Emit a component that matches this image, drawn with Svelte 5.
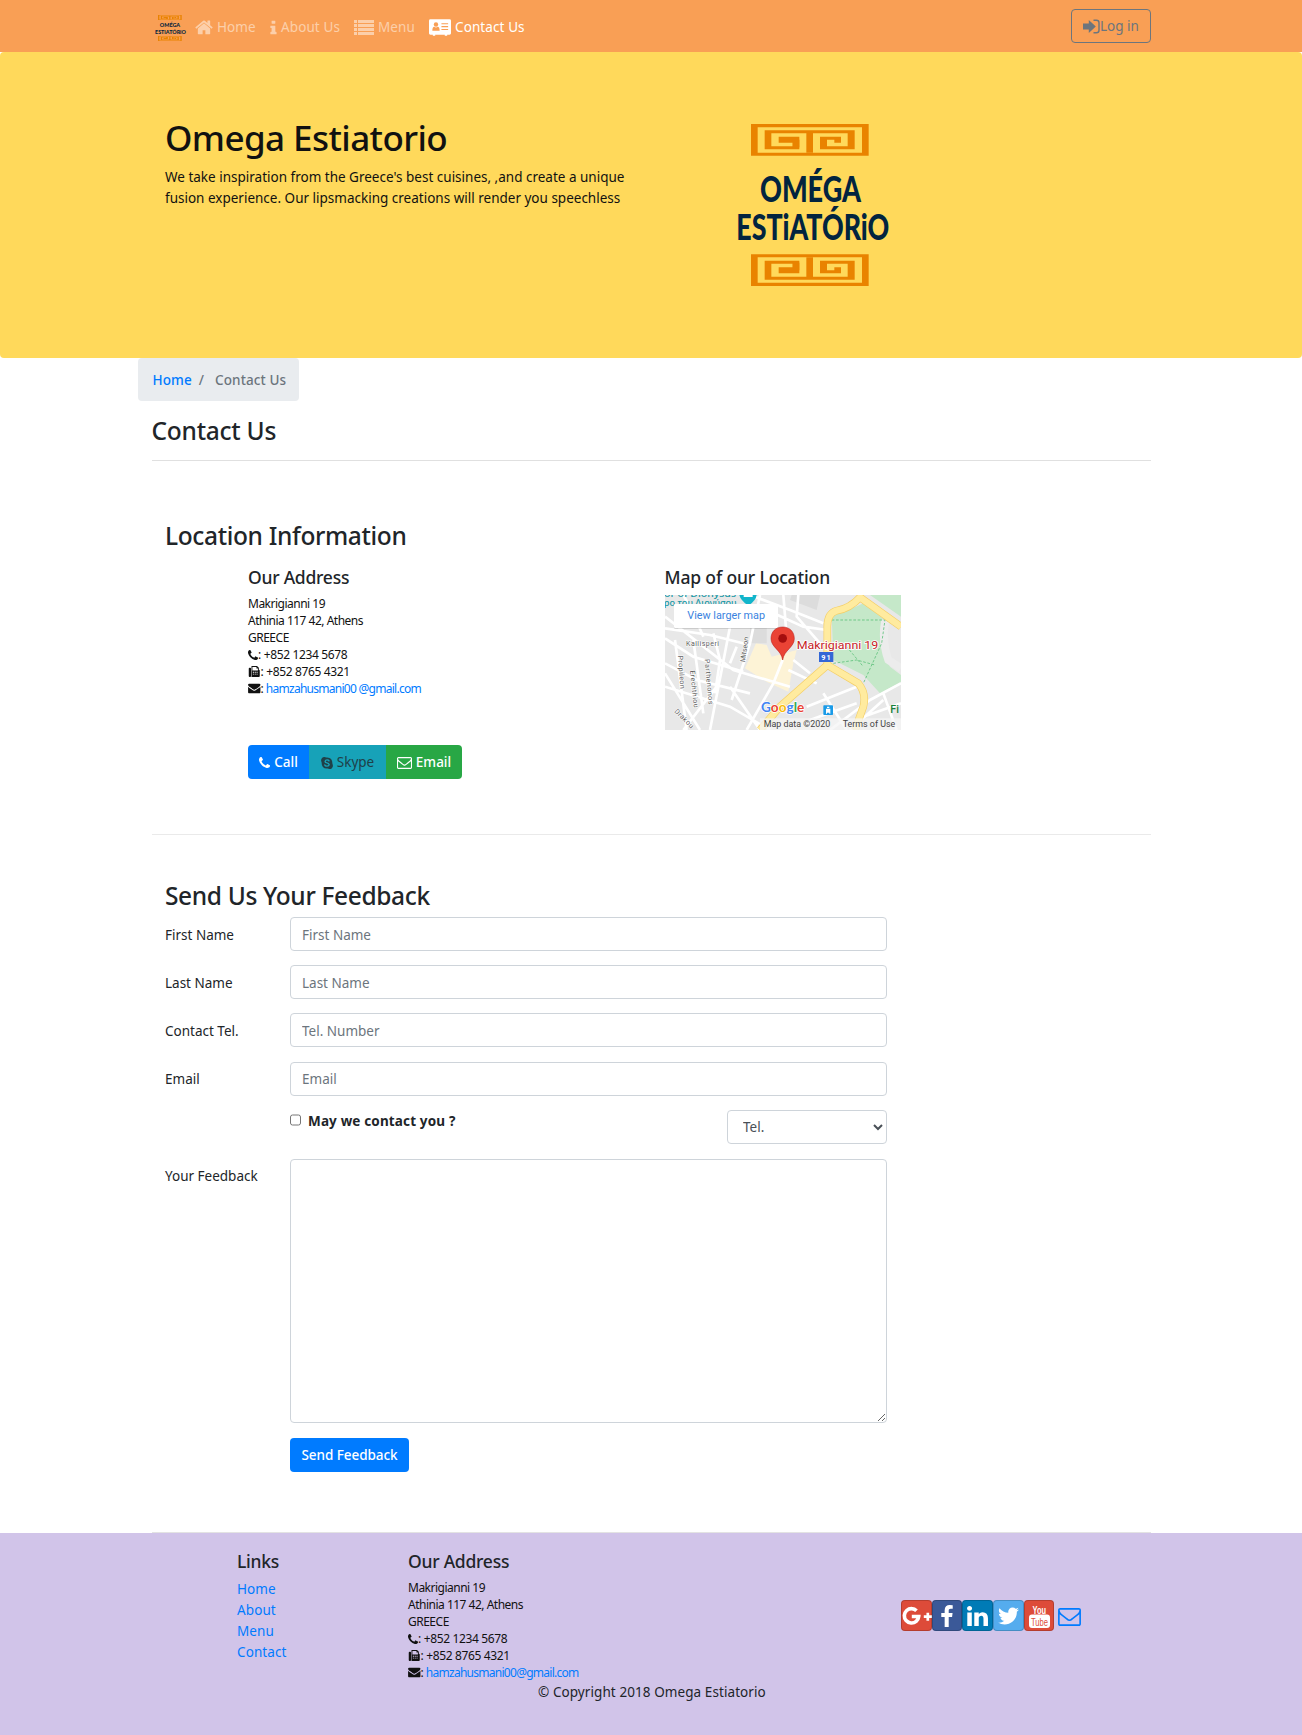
<script>
  const fields = [
    { label: 'First Name', hint: 'First Name' },
    { label: 'Last Name', hint: 'Last Name' },
    { label: 'Contact Tel.', hint: 'Tel. Number' },
    { label: 'Email', hint: 'Email' }
  ];
  const links = ['Home', 'About', 'Menu', 'Contact'];

  const icons = {
    home: 'M1472 992v480q0 26-19 45t-45 19h-384v-384h-256v384h-384q-26 0-45-19t-19-45v-480q0-1 .5-3t.5-3l575-474 575 474q1 2 1 6zm223-69l-62 74q-8 9-21 11h-3q-13 0-21-7l-692-577-692 577q-12 8-24 7-13-2-21-11l-62-74q-8-10-7-23.5t11-21.5l719-599q32-26 76-26t76 26l244 204v-195q0-14 9-23t23-9h192q14 0 23 9t9 23v408l219 182q10 8 11 21.5t-7 23.5z',
    info: 'M1216 1344v128q0 26-19 45t-45 19h-512q-26 0-45-19t-19-45v-128q0-26 19-45t45-19h64v-384h-64q-26 0-45-19t-19-45v-128q0-26 19-45t45-19h384q26 0 45 19t19 45v576h64q26 0 45 19t19 45zm-128-1152v192q0 26-19 45t-45 19h-256q-26 0-45-19t-19-45v-192q0-26 19-45t45-19h256q26 0 45 19t19 45z',
    phone: 'M1600 1240q0 27-10 70.5t-21 68.5q-21 50-122 106-94 51-186 51-27 0-53-3.5t-57.5-12.5-47-14.5-55.5-20.5-49-18q-98-35-175-83-127-79-264-216t-216-264q-48-77-83-175-3-9-18-49t-20.5-55.5-14.5-47-12.5-57.5-3.5-53q0-92 51-186 56-101 106-122 25-11 68.5-21t70.5-10q14 0 21 3 18 6 53 76 11 19 30 54t35 63.5 31 53.5q3 4 17.5 25t21.5 35.5 7 28.5q0 20-28.5 50t-62 55-62 53-28.5 46q0 9 5 22.5t8.5 20.5 14 24 11.5 19q76 137 174 235t235 174q2 1 19 11.5t24 14 20.5 8.5 22.5 5q18 0 46-28.5t53-62 55-62 50-28.5q14 0 28.5 7t35.5 21.5 25 17.5q25 15 53.5 31t63.5 35 54 30q70 35 76 53 3 7 3 21z',
    mailOutline: 'M1664 1504v-768q-32 36-69 66-268 206-426 338-51 43-83 67t-86.5 48.5-102.5 24.5h-2q-48 0-102.5-24.5t-86.5-48.5-83-67q-158-132-426-338-37-30-69-66v768q0 13 9.5 22.5t22.5 9.5h1472q13 0 22.5-9.5t9.5-22.5zm0-1051v-24.5l-.5-13-3-12.5-5.5-9-9-7.5-14-2.5h-1472q-13 0-22.5 9.5t-9.5 22.5q0 168 147 284 193 152 401 317 6 5 35 29.5t46 37.5 44.5 31.5 50.5 27.5 43 9h2q20 0 43-9t50.5-27.5 44.5-31.5 46-37.5 35-29.5q208-165 401-317 54-43 100.5-115.5t46.5-131.5zm128-37v1088q0 66-47 113t-113 47h-1472q-66 0-113-47t-47-113v-1088q0-66 47-113t113-47h1472q66 0 113 47t47 113z',
    mail: 'M1792 710v794q0 66-47 113t-113 47h-1472q-66 0-113-47t-47-113v-794q44 49 101 87 362 246 497 345 57 42 92.5 65.5t94.5 48 110 24.5h2q51 0 110-24.5t94.5-48 92.5-65.5q170-123 498-345 57-39 100-87zm0-294q0 79-49 151t-122 123q-376 261-468 325-10 7-42.5 31t-54 38.5-52 32.5-57.5 27-50 9h-2q-23 0-50-9t-57.5-27-52-32.5-54-38.5-42.5-31q-91-64-262-182.5t-205-142.5q-62-42-117-115.5t-55-136.5q0-78 41.5-130t118.5-52h1472q65 0 112.5 47t47.5 113z',
    twitter: 'M1684 408q-67 98-162 167 1 14 1 42 0 130-38 259.5t-115.5 248.5-184.5 210.5-258 146-323 54.5q-271 0-496-145 35 4 78 4 225 0 401-138-105-2-188-64.5t-114-159.5q33 5 61 5 43 0 85-11-112-23-185.5-111.5t-73.5-205.5v-4q68 38 146 41-66-44-105-115t-39-154q0-88 44-163 121 149 294.5 238.5t371.5 99.5q-8-38-8-74 0-134 94.5-228.5t228.5-94.5q140 0 236 102 109-21 205-78-37 115-142 178 93-10 186-50z',
    facebook: 'M1343 12v264h-157q-86 0-116 36t-30 108v189h293l-39 296h-254v759h-306v-759h-255v-296h255v-218q0-186 104-288.5t277-102.5q147 0 228 12z',
    linkedin: 'M477 625v991h-330v-991h330zm21-306q1 73-50.5 122t-135.5 49h-2q-82 0-132-49t-50-122q0-74 51.5-122.5t134.5-48.5 133 48.5 51 122.5zm1166 729v568h-329v-530q0-105-40.5-164.5t-126.5-59.5q-63 0-105.5 34.5t-63.5 85.5q-11 30-11 81v553h-329q2-399 2-647t-1-296l-1-48h329v144h-2q20-32 41-56t56.5-52 87-43.5 114.5-15.5q171 0 275 113.5t104 332.5z'
  };
</script>

{#snippet icon(name, cls, box = '0 0 1792 1792')}
  <svg class={cls} viewBox={box} fill="currentColor" aria-hidden="true"><path d={icons[name]} /></svg>
{/snippet}

{#snippet logo(cls)}
  <svg class={cls} viewBox="0 0 462 486" preserveAspectRatio="none" overflow="visible" role="img" aria-label="Omega Estiatorio">
    <defs>
      <g id="meander-{cls}" fill="#e98300">
        <path fill-rule="evenodd" d="M0 0H353V95H0ZM20 10V86H333V10Z" />
        <path d="M41 19H311V76H207V38H270V56H250V47H228V67H290V28H186V86H166V28H61V67H125V56H105V56H83V38H145V76H41Z" />
        <path d="M125 47H145V70H125Z" />
      </g>
    </defs>
    <use href="#meander-{cls}" x="45" y="0" />
    <use href="#meander-{cls}" transform="translate(45 486) scale(1 -1)" />
    <g class="wordmark">
      <text x="72" y="233" textLength="303" lengthAdjust="spacingAndGlyphs">OMÉGA</text>
      <text x="1" y="348" textLength="459" lengthAdjust="spacingAndGlyphs">ESTiATÓRiO</text>
    </g>
  </svg>
{/snippet}

{#snippet address(email)}
  <address>
    <div>Makrigianni 19</div>
    <div>Athinia 117 42, Athens</div>
    <div>GREECE</div>
    <div class="line">{@render icon('phone', 'a-phone', '192 128 1408 1408')}<span class="num">: +852 1234 5678</span></div>
    <div class="line">
      <svg class="a-wide" viewBox="0 0 12 12" aria-hidden="true">
        <path fill="currentColor" d="M0 3q0-1 1-1h.6q.9 0 .9 1v8q0 1-.9 1H1q-1 0-1-1ZM3 0h6l2 2v2q1 0 1 1v6q0 1-1 1H3Z" />
        <path fill="var(--paper)" d="M4 1h4.400v1.700H10V5H4ZM4.500 6.400h1.200v1H4.500Zm2 0h1.200v1H6.500Zm2 0h1.200v1H8.500Zm-4 2h1.200v1H4.500Zm2 0h1.200v1H6.500Zm2 0h1.200v1H8.500Z" />
      </svg><span class="num">: +852 8765 4321</span>
    </div>
    <div class="line">{@render icon('mail', 'a-wide', '0 160 1792 1600')}<span>: <a class="address-mail" href="#mail">{email}</a></span></div>
  </address>
{/snippet}

<nav>
  <div class="brand">{@render logo('logo-small')}</div>
  <a class="item home" href="#home">{@render icon('home', 'i-home', '64 200 1664 1400')}Home</a>
  <a class="item about" href="#about">{@render icon('info', 'i-info', '540 128 720 1408')}About Us</a>
  <a class="item menu" href="#menu">
    <svg class="i-list" viewBox="0 0 20 15" fill="currentColor" aria-hidden="true">
      <path d="M0 0h3v3H0zM4 0H20v3H4zM0 4h3v3H0zM4 4H20v3H4zM0 8h3v3H0zM4 8H20v3H4zM0 12h3v3H0zM4 12H20v3H4z" />
    </svg>Menu
  </a>
  <a class="item contact" href="#contact">
    <svg class="i-card" viewBox="0 0 23 17" aria-hidden="true">
      <path fill="#fff" d="M1.500 0h20Q23 0 23 1.500v13q0 1.500-1.500 1.500H19v1h-2.500v-1h-10v1H4v-1H1.500Q0 16 0 14.500v-13Q0 0 1.500 0Z" />
      <circle cx="7.300" cy="5.400" r="2.300" fill="#f99f55" />
      <path fill="#f99f55" d="M3.500 12q0-4.200 2-4.200 1.800 1.300 3.600 0 2 0 2 4.200ZM13 4h7v1.200h-7ZM13 7h7v1.200h-7ZM13 10h7v1.200h-7Z" />
    </svg>Contact Us
  </a>
  <button class="login">
    <svg class="i-login" viewBox="0 0 17 15" aria-hidden="true">
      <path fill="currentColor" d="M0 4.500h5.800V1L12.800 7.500 5.800 14V10.500H0Z" />
      <path fill="none" stroke="currentColor" stroke-width="1.400" d="M10.500 1.200h3q2.500 0 2.500 2.500v7.600q0 2.500-2.500 2.500h-3" />
    </svg>Log in
  </button>
</nav>

<header>
  <div class="intro">
    <h1>Omega Estiatorio</h1>
    <p>We take inspiration from the Greece's best cuisines, ,and create a unique<br />fusion experience. Our lipsmacking creations will render you speechless</p>
  </div>
  {@render logo('logo-big')}
</header>

<main>
  <ol class="crumbs">
    <li><a href="#home">Home</a></li>
    <li class="sep">/</li>
    <li>Contact Us</li>
  </ol>
  <h3 class="title">Contact Us</h3>

  <section class="location">
    <h3 class="h-location">Location Information</h3>
    <div class="columns">
      <div class="where">
        <h5>Our Address</h5>
        {@render address('hamzahusmani00 @gmail.com')}
        <div class="group">
          <a class="call" href="#call">{@render icon('phone', 'b-phone', '192 128 1408 1408')}Call</a>
          <a class="skype" href="#skype">
            <svg class="b-skype" viewBox="0 0 12 12" aria-hidden="true">
              <path fill="currentColor" d="M3.300 0Q4.500 0 5.200.6 11.500 0 11.400 6.800 12.600 9 11 11T6.800 11.400Q.5 12 .6 5.200-.600 3 1 1 2 0 3.300 0Z" />
              <path fill="none" stroke="#17a2b8" stroke-width="1.400" stroke-linecap="round" d="M8 3.900Q7.500 2.900 6 2.900T4.100 4.400Q4.100 5.500 6 5.900T8.200 7.600Q8 9.100 6 9.100T3.800 8" />
            </svg>Skype
          </a>
          <a class="email" href="#email">{@render icon('mailOutline', 'b-mail', '0 256 1792 1408')}Email</a>
        </div>
      </div>
      <div class="map-col">
        <h5 class="h-map">Map of our Location</h5>
        <svg class="map" viewBox="45 105 708 405" role="img" aria-label="Map">
          <rect x="45" y="105" width="708" height="405" fill="#e8e8e8" />
          <path fill="#fdf3d6" d="M318 250 350 255 365 290 440 270 430 310 415 395 350 365 285 325Z" />
          <path fill="#dcdcdc" d="M300 190H350V250H300ZM420 120 500 150 510 105H425Z" />
          <path fill="#c5e8c9" d="M545 165Q600 150 640 130L705 180 690 250 720 320 753 345V365L690 400 640 345 550 300ZM660 105H753V170Z" />
          <g fill="none" stroke="#fff" stroke-width="8">
            <path d="M45 170 250 330 420 380M45 235 130 290 280 335M100 105 130 160 160 230M45 205 180 225 300 255M240 200 215 330 180 510M330 105 300 250 245 420M75 240 110 510M130 240 160 460M190 220 210 300 195 400M260 260 240 310M45 380 240 440 360 510M45 310 140 360 300 400M398 300 370 370 290 510M430 300 480 340M415 330 500 370M45 340 150 510M300 105 420 150 520 190M400 105 410 230M445 105 440 170 510 250M350 150 460 200 530 210M240 380 330 510M200 380 100 510M520 400 590 510M470 440 620 380M540 510 660 420 753 370M600 510 700 420M480 480 620 430M640 470 753 430M700 400 740 510" />
          </g>
          <path fill="none" stroke="#ececec" stroke-width="24" d="M706 180Q694 240 715 300L753 325" />
          <g fill="none" stroke="#5fc27c" stroke-width="2.500" stroke-dasharray="8 5">
            <path d="M545 180H705L695 250 640 370M550 310 620 300 675 315M590 260 640 320" />
          </g>
          <g fill="none" stroke="#f5cf66" stroke-width="23" stroke-linejoin="round">
            <path d="M753 200 630 112Q600 145 560 152 532 160 532 200V315L390 440 330 510M532 315 625 370Q650 400 640 440L615 510" />
          </g>
          <g fill="none" stroke="#ffeb9f" stroke-width="19" stroke-linejoin="round">
            <path d="M753 200 630 112Q600 145 560 152 532 160 532 200V315L390 440 330 510M532 315 625 370Q650 400 640 440L615 510" />
          </g>
          <path fill="#12b5cb" d="M268 105H320Q318 122 295 137 272 122 268 105Z" />
          <path fill="#fff" d="M281 105h27v6h-27z" />
          <g class="poi" fill="#1397a5">
            <text x="42" y="110" textLength="216" lengthAdjust="spacingAndGlyphs">or of Dionysus</text>
            <text x="42" y="138" textLength="218" lengthAdjust="spacingAndGlyphs">ρο του Διονύσου</text>
          </g>
          <rect x="72" y="135" width="312" height="72" rx="4" fill="#000" opacity=".12" />
          <rect x="72" y="132" width="312" height="72" rx="4" fill="#fff" />
          <text class="roboto" x="112" y="176" font-size="31" fill="#3a83e0" textLength="233" lengthAdjust="spacingAndGlyphs">View larger map</text>
          <g class="street">
            <text x="108" y="257" textLength="99">Kallisperi</text>
            <text transform="translate(285 307) rotate(-82)" textLength="76">Mitseon</text>
            <text transform="translate(84 287) rotate(86)" textLength="100">Propileon</text>
            <text transform="translate(120 332) rotate(84)" textLength="112">Erechthiou</text>
            <text transform="translate(164 298) rotate(85)" textLength="136">Parthenonos</text>
            <text transform="translate(72 455) rotate(45)" textLength="72">Drakou</text>
          </g>
          <rect x="507" y="276" width="43" height="30" fill="#3367d6" />
          <text class="roboto" x="514" y="299" font-size="22" font-weight="700" fill="#fff" textLength="28">91</text>
          <path fill="#ea4335" stroke="#b31412" stroke-width="1.500" d="M398 201C376 201 363 216 363 236 363 262 394 270 398 300 402 270 433 262 433 236 433 216 420 201 398 201Z" />
          <circle cx="398" cy="235" r="13" fill="#a50e0e" />
          <text class="roboto halo" x="440" y="267" font-size="33" fill="#c5221f" textLength="245" lengthAdjust="spacingAndGlyphs">Makrigianni 19</text>
          <rect x="330" y="475" width="423" height="35" fill="#f5f5f5" opacity=".75" />
          <text class="google" x="333" y="455" textLength="130" lengthAdjust="spacingAndGlyphs"><tspan fill="#4285f4">G</tspan><tspan fill="#ea4335">o</tspan><tspan fill="#fbbc04">o</tspan><tspan fill="#4285f4">g</tspan><tspan fill="#34a853">l</tspan><tspan fill="#ea4335">e</tspan></text>
          <rect x="520" y="436" width="29" height="29" rx="2" fill="#1a9be8" />
          <path fill="#fff" d="M528 446h13v15h-3v-3h-7v3h-3zM531 440h7v4h-7z" />
          <text class="roboto" x="721" y="459" font-size="32" font-weight="500" fill="#188038">Fi</text>
          <text class="roboto" x="341" y="501" font-size="25" fill="#444" textLength="200" lengthAdjust="spacingAndGlyphs">Map data ©2020</text>
          <text class="roboto" x="578" y="501" font-size="25" fill="#444" textLength="158" lengthAdjust="spacingAndGlyphs">Terms of Use</text>
        </svg>
      </div>
    </div>
  </section>

  <section class="feedback">
    <h3 class="h-feedback">Send Us Your Feedback</h3>
    <form>
      {#each fields as f}
        <label for={f.label}>{f.label}</label>
        <input class="box" id={f.label} placeholder={f.hint} />
      {/each}
      <span></span>
      <div class="consent">
        <label class="check"><input type="checkbox" /><b>May we contact you ?</b></label>
        <select class="box"><option>Tel.</option></select>
      </div>
      <label for="feedback">Your Feedback</label>
      <textarea class="box" id="feedback"></textarea>
      <span></span>
      <button type="button" class="send">Send Feedback</button>
    </form>
  </section>
  <div class="rule"></div>
</main>

<footer>
  <div class="foot">
    <div class="f-links">
      <h5 class="h-links">Links</h5>
      {#each links as l}<a href="#{l}">{l}</a>{/each}
    </div>
    <div class="f-address">
      <h5>Our Address</h5>
      {@render address('hamzahusmani00@gmail.com')}
    </div>
    <div class="social">
      <span class="tile gp">
        <svg viewBox="0 0 31 31" fill="none" stroke="#fff"><path stroke-width="3.600" d="M15.500 10.700Q13.500 8.600 10.800 8.600A7.200 7.200 0 1 0 17.700 16.500H10.800" /><path stroke-width="2.700" d="M22.800 16.700h8M26.800 12.700v8" /></svg>
      </span>
      <span class="tile fb">{@render icon('facebook', 's-fb', '479 0 864 1664')}</span>
      <span class="tile in">{@render icon('linkedin', 's-in', '128 148 1536 1468')}</span>
      <span class="tile tw">{@render icon('twitter', 's-tw', '108 256 1576 1280')}</span>
      <span class="tile yt">
        <svg viewBox="0 0 31 31">
          <rect x="5" y="14.500" width="21" height="13.500" rx="3" fill="#fff" />
          <text x="8.500" y="13.500" textLength="13.500" lengthAdjust="spacingAndGlyphs" fill="#fff">You</text>
          <text class="tube" x="7" y="26" textLength="17" lengthAdjust="spacingAndGlyphs" fill="#dd4b39">Tube</text>
        </svg>
      </span>
      {@render icon('mailOutline', 's-mail', '0 256 1792 1408')}
    </div>
  </div>
  <p class="copy">© Copyright 2018 Omega Estiatorio</p>
</footer>

<style>
  :global(body) {
    margin: 0;
    background: #fff;
    color: #212529;
    font: 13.5px/21px 'Noto Sans', 'Open Sans', sans-serif;
  }
  * { box-sizing: border-box; }
  a { color: #007bff; text-decoration: none; }
  h1, h3, h5, p, ol { margin: 0; padding: 0; font-weight: 500; }
  p { font-weight: 400; }
  h3 { font-size: 24.5px; line-height: 29.4px; letter-spacing: -.35px; }
  h5 { font-size: 17.500px; line-height: 21px; letter-spacing: -.25px; }
  svg { display: block; flex: none; }

  nav {
    height: 52px;
    padding: 0 151px 0 155px;
    display: flex;
    align-items: center;
    background: #f99f55;
  }
  .brand { width: 40px; padding-top: 3px; }
  :global(.logo-small) { width: 31px; height: 26px; }
  .item { display: flex; align-items: center; gap: 4px; color: rgba(255, 255, 255, .5); padding-top: 2px; letter-spacing: .1px; }
  .home { width: 75px; }
  .about { width: 84px; }
  .menu { width: 75px; }
  .contact { color: #fff; }
  .contact, .about { white-space: nowrap; }
  :global(.i-home) { width: 18px; height: 15px; }
  :global(.i-info) { width: 7px; height: 15px; }
  .i-list { width: 20px; height: 15px; }
  .i-card { width: 22px; height: 17px; }
  .login {
    margin-left: auto;
    width: 80px;
    height: 34px;
    display: flex;
    align-items: center;
    padding: 1px 0 0 11px;
    border: 1px solid #6c757d;
    border-radius: 4px;
    background: none;
    color: #6c757d;
    font: inherit;
    white-space: nowrap;
  }
  .i-login { width: 17px; height: 15px; }

  header {
    height: 306px;
    padding: 65px 0 0 165px;
    display: flex;
    background: #ffd95b;
    border-radius: 4px;
    color: #111;
  }
  .intro { width: 571px; }
  h1 { font-size: 35px; line-height: 42px; margin-bottom: 8px; letter-spacing: -.57px; }
  .intro p { white-space: nowrap; }
  :global(.logo-big) { width: 154px; height: 162px; margin-top: 7px; }
  .wordmark { font-family: Lato, sans-serif; font-weight: 900; font-size: 110px; fill: #02243f; }

  main { height: 1174.500px; padding: 0 151px 0 151.500px; }
  .crumbs {
    display: flex;
    width: 161px;
    height: 43px;
    margin-left: -13.500px;
    padding: 11.500px 14.500px;
    list-style: none;
    white-space: nowrap;
    border-radius: 4px;
    background: #e9ecef;
    color: #6c757d;
    letter-spacing: .1px;
  }
  .sep { padding: 0 11px 0 7px; }
  .title { height: 45px; margin-top: 15px; border-bottom: 1px solid #e0e0e0; letter-spacing: -.25px; }

  .location { height: 374px; padding: 60px 0 0 13.500px; border-bottom: 1px solid #eaeaea; }
  .columns { display: flex; padding: 17px 0 0 83px; }
  .where { width: 416.500px; }
  address { --paper: #fff; margin-top: 7px; font: 12px/17px 'Noto Sans', sans-serif; white-space: nowrap; letter-spacing: -.5px; color: #111; }
  .num { letter-spacing: -.35px; }
  .address-mail { letter-spacing: -.73px; }
  .line { display: flex; align-items: center; }
  :global(.a-phone) { width: 10px; height: 10px; }
  :global(.a-wide) { width: 12.500px; height: 11px; }
  .group { display: flex; margin-top: 48px; height: 34px; }
  .group a { display: flex; align-items: center; justify-content: center; gap: 4px; color: #fff; font-weight: 500; padding-top: 1px; }
  .call { width: 61px; background: #007bff; border-radius: 4px 0 0 4px; }
  .group .skype { width: 77px; background: #17a2b8; color: #1f4048; font-weight: 400; }
  .email { width: 76px; background: #28a745; border-radius: 0 4px 4px 0; }
  :global(.b-phone) { width: 11px; height: 11px; }
  .b-skype { width: 12px; height: 12px; }
  :global(.b-mail) { width: 15px; height: 12px; }
  .map { width: 236px; height: 135px; margin-top: 7px; }
  .h-map { letter-spacing: -.15px; }
  .roboto { font-family: Roboto, sans-serif; }
  .halo { paint-order: stroke; stroke: #fff; stroke-width: 5px; }
  .google { font-family: Lato, sans-serif; font-weight: 700; font-size: 40px; paint-order: stroke; stroke: #fff; stroke-width: 4px; }
  .poi { font: 500 24px 'Noto Sans', sans-serif; }
  .street text { font: 21px Roboto, sans-serif; fill: #606060; paint-order: stroke; stroke: #fff; stroke-width: 3px; }

  .feedback { padding: 46px 0 0 13.500px; }
  form { display: grid; grid-template-columns: 125px 597px; grid-template-rows: repeat(4, 34px) 35px 264.500px 34px; row-gap: 14.200px; padding-top: 6.600px; }
  form > label { padding-top: 7.500px; }
  .box {
    width: 100%;
    height: 34px;
    padding: 1px 11px 0;
    border: 1px solid #ced4da;
    border-radius: 4px;
    background: #fff;
    font: inherit;
    color: #495057;
  }
  .box::placeholder { color: #6c757d; opacity: 1; }
  .consent { display: flex; justify-content: space-between; }
  .check { display: flex; gap: 7px; white-space: nowrap; padding-top: 1px; }
  .check b { letter-spacing: .15px; }
  .check input { width: 11px; height: 12px; margin: 3px 0 0; }
  .consent .box { width: 160px; }
  textarea.box { height: 264.500px; }
  .send { width: 119px; height: 34px; padding: 1px 0 0; border: 0; border-radius: 4px; background: #007bff; color: #fff; font: 500 13.500px/21px 'Noto Sans', sans-serif; letter-spacing: -.05px; white-space: nowrap; }
  .rule { height: 1px; margin-top: 60px; background: #e3e3e3; }

  footer { height: 202.500px; padding: 18.500px 0 0 237px; background: #d1c4e9; }
  .foot { display: flex; height: 130.500px; }
  .f-links { width: 171px; }
  .f-links a { display: block; letter-spacing: .1px; }
  .h-links { margin-bottom: 7px; }
  .f-address { width: 493px; }
  .f-address address { --paper: #d1c4e9; }
  .social { display: flex; padding-top: 49px; height: 80px; }
  .tile { display: flex; align-items: center; justify-content: center; width: 30.700px; height: 31px; border-radius: 4px; color: #fff; box-shadow: inset 0 0 0 1px rgba(0, 0, 0, .18); }
  .tile svg { width: 31px; height: 31px; }
  .tile text { font: 700 11.500px 'Liberation Sans', sans-serif; }
  .tile .tube { font-weight: 400; }
  .gp, .yt { background: #dd4b39; }
  .fb { background: #3b5998; }
  .in { background: #007bb6; }
  .tw { background: #55acee; }
  .tile :global(.s-fb) { width: 12px; height: 22px; }
  .tile :global(.s-in) { width: 21px; height: 20px; }
  .tile :global(.s-tw) { width: 21px; height: 18px; }
  :global(.s-mail) { width: 23px; height: 18px; margin: 8px 0 0 4px; color: #007bff; }
  .copy { margin-left: 301px; letter-spacing: .08px; }
</style>
